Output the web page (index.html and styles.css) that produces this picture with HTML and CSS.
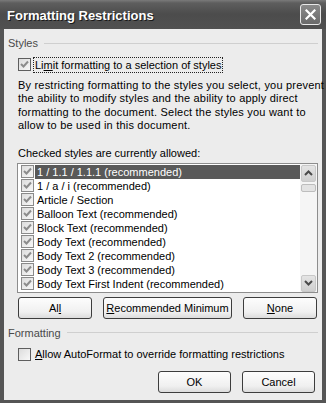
FILE: index.html
```html
<!DOCTYPE html>
<html lang="en">
<head>
    <meta charset="UTF-8">
    <title>Formatting Restrictions</title>
    <link rel="stylesheet" href="styles.css">
</head>
<body>
    <div class="window">
        <div class="titlebar">
            <span class="title">Formatting Restrictions</span>
            <span class="close">
                <svg width="11" height="11" viewBox="0 0 11 11"><path d="M1.5 1.5 L9.5 9.5 M9.5 1.5 L1.5 9.5" stroke="#fff" stroke-width="2.2" stroke-linecap="square"/></svg>
            </span>
        </div>

        <div class="client">
            <!-- grupo styles -->
            <div class="group-head"><span>Styles</span><i class="rule"></i></div>

            <div class="check-row limit">
                <span class="cb checked"><svg width="9" height="9" viewBox="0 0 9 9"><path d="M1 4 L3.5 6.5 L8 1.5" fill="none" stroke="#8c8c8c" stroke-width="2"/></svg></span>
                <span class="focus">Li<u>m</u>it formatting to a selection of styles</span>
            </div>

            <p class="info">By restricting formatting to the styles you select, you prevent<br>the ability to modify styles and the ability to apply direct<br>formatting to the document. Select the styles you want to<br>allow to be used in this document.</p>

            <p class="caption">Checked styles are currently allowed:</p>

            <div class="listbox">
                <ul class="items">
                    <li class="selected"><span class="cb checked"><svg width="9" height="9" viewBox="0 0 9 9"><path d="M1 4 L3.5 6.5 L8 1.5" fill="none" stroke="#8c8c8c" stroke-width="2"/></svg></span><span class="txt">1 / 1.1 / 1.1.1 (recommended)</span></li>
                    <li><span class="cb checked"><svg width="9" height="9" viewBox="0 0 9 9"><path d="M1 4 L3.5 6.5 L8 1.5" fill="none" stroke="#8c8c8c" stroke-width="2"/></svg></span><span class="txt">1 / a / i (recommended)</span></li>
                    <li><span class="cb checked"><svg width="9" height="9" viewBox="0 0 9 9"><path d="M1 4 L3.5 6.5 L8 1.5" fill="none" stroke="#8c8c8c" stroke-width="2"/></svg></span><span class="txt">Article / Section</span></li>
                    <li><span class="cb checked"><svg width="9" height="9" viewBox="0 0 9 9"><path d="M1 4 L3.5 6.5 L8 1.5" fill="none" stroke="#8c8c8c" stroke-width="2"/></svg></span><span class="txt">Balloon Text (recommended)</span></li>
                    <li><span class="cb checked"><svg width="9" height="9" viewBox="0 0 9 9"><path d="M1 4 L3.5 6.5 L8 1.5" fill="none" stroke="#8c8c8c" stroke-width="2"/></svg></span><span class="txt">Block Text (recommended)</span></li>
                    <li><span class="cb checked"><svg width="9" height="9" viewBox="0 0 9 9"><path d="M1 4 L3.5 6.5 L8 1.5" fill="none" stroke="#8c8c8c" stroke-width="2"/></svg></span><span class="txt">Body Text (recommended)</span></li>
                    <li><span class="cb checked"><svg width="9" height="9" viewBox="0 0 9 9"><path d="M1 4 L3.5 6.5 L8 1.5" fill="none" stroke="#8c8c8c" stroke-width="2"/></svg></span><span class="txt">Body Text 2 (recommended)</span></li>
                    <li><span class="cb checked"><svg width="9" height="9" viewBox="0 0 9 9"><path d="M1 4 L3.5 6.5 L8 1.5" fill="none" stroke="#8c8c8c" stroke-width="2"/></svg></span><span class="txt">Body Text 3 (recommended)</span></li>
                    <li><span class="cb checked"><svg width="9" height="9" viewBox="0 0 9 9"><path d="M1 4 L3.5 6.5 L8 1.5" fill="none" stroke="#8c8c8c" stroke-width="2"/></svg></span><span class="txt">Body Text First Indent (recommended)</span></li>
                </ul>
                <div class="scrollbar">
                    <span class="arrow"><svg width="9" height="6" viewBox="0 0 9 6"><path d="M1 5 L4.5 1.5 L8 5" fill="none" stroke="#4a4a4a" stroke-width="2"/></svg></span>
                    <span class="thumb"></span>
                    <span class="track"></span>
                    <span class="arrow"><svg width="9" height="6" viewBox="0 0 9 6"><path d="M1 1 L4.5 4.5 L8 1" fill="none" stroke="#4a4a4a" stroke-width="2"/></svg></span>
                </div>
            </div>

            <div class="btn-row spread">
                <button class="btn small">Al<u>l</u></button>
                <button class="btn wide"><u>R</u>ecommended Minimum</button>
                <button class="btn small"><u>N</u>one</button>
            </div>

            <!-- grupo formatting -->
            <div class="group-head"><span>Formatting</span><i class="rule"></i></div>

            <div class="check-row allow">
                <span class="cb"></span>
                <span class="lbl"><u>A</u>llow AutoFormat to override formatting restrictions</span>
            </div>

            <div class="btn-row end">
                <button class="btn small">OK</button>
                <button class="btn small">Cancel</button>
            </div>
        </div>
    </div>
</body>
</html>
```

FILE: styles.css
```css
body {
    margin: 0;
    background: #fff;
    font-family: "Liberation Sans", Arial, sans-serif;
    font-size: 11px;
    color: #000;
}

.window {
    width: 326px;
    height: 403px;
    box-sizing: border-box;
    background: #555;
    padding: 0 4px 3px 4px;
    display: flex;
    flex-direction: column;
}

/* barra de titulo */
.titlebar {
    height: 29px;
    margin: 0 -4px;
    padding: 0 4px 0 7px;
    display: flex;
    align-items: center;
    justify-content: space-between;
    background: linear-gradient(#7a7a7a 0, #5e5e5e 3px, #4c4c4c 14px, #505050 29px);
}

.title {
    color: #fff;
    font-weight: bold;
    font-size: 13px;
    text-shadow: 1px 1px 0 #1a1a1a;
    margin-top: 1px;
}

.close {
    width: 19px;
    height: 19px;
    border: 1px solid #e8e8e8;
    border-radius: 3px;
    background: linear-gradient(#8a8a8a, #6a6a6a);
    display: flex;
    align-items: center;
    justify-content: center;
    margin-right: 1px;
}

.client {
    flex: 1;
    background: #ececec;
    padding: 0 4px;
}

.group-head {
    display: flex;
    align-items: center;
    height: 14px;
    color: #4a4a4a;
    margin-top: 7px;
}

.group-head .rule {
    flex: 1;
    height: 1px;
    background: #cfcfcf;
    margin-left: 6px;
}

.check-row {
    display: flex;
    align-items: center;
    margin-left: 10px;
    height: 17px;
}

.limit {
    margin-top: 6px;
}

.allow {
    margin-top: 6px;
}

.cb {
    width: 11px;
    height: 11px;
    border: 1px solid #5e5e5e;
    background: linear-gradient(135deg, #dcdcdc, #f8f8f8);
    display: flex;
    align-items: center;
    justify-content: center;
    flex: none;
}

.focus {
    margin-left: 2px;
    padding: 1px;
    border: 1px dotted #222;
}

.lbl {
    margin-left: 4px;
}

.info {
    margin: 6px 0 0 10px;
    line-height: 13.4px;
    letter-spacing: 0.2px;
    white-space: nowrap;
}

.caption {
    margin: 14px 0 0 10px;
    line-height: 13px;
}

.listbox {
    margin: 3px 0 0 9px;
    height: 130px;
    box-sizing: border-box;
    border: 1px solid #8d8d8d;
    background: #fff;
    display: flex;
}

.items {
    list-style: none;
    margin: 0;
    padding: 1px 0 0 3px;
    flex: 1;
}

.items li {
    height: 14px;
    display: flex;
    align-items: center;
}

.items .cb {
    border-color: #8a8a8a;
    margin-right: 1px;
}

.items .txt {
    flex: 1;
    padding-left: 2px;
    line-height: 14px;
}

.items .selected .txt {
    background: #595959;
    color: #fff;
}

.scrollbar {
    width: 17px;
    display: flex;
    flex-direction: column;
    background: #f5f5f5;
    padding-top: 1px;
}

.scrollbar .arrow {
    height: 15px;
    margin: 0 1px;
    border: 1px solid #c8c8c8;
    border-radius: 2px;
    background: linear-gradient(#e4e4e4, #cfcfcf);
    display: flex;
    align-items: center;
    justify-content: center;
}

.scrollbar .thumb {
    height: 6px;
    margin: 2px 1px 0 1px;
    border: 1px solid #bdbdbd;
    border-radius: 2px;
    background: #e3e3e3;
}

.scrollbar .track {
    flex: 1;
}

.btn-row {
    display: flex;
    margin-left: 10px;
}

.btn-row.spread {
    margin-top: 4px;
    gap: 11px;
}

.btn-row.end {
    justify-content: flex-end;
    gap: 11px;
    margin-top: 8px;
    margin-right: 3px;
}

.btn {
    height: 22px;
    border: 1px solid #3d3d3d;
    border-radius: 3px;
    background: linear-gradient(#fdfdfd, #f0f0f0 70%, #dcdcdc);
    font-family: inherit;
    font-size: 11px;
    color: #000;
    padding: 0;
}

.btn.small {
    width: 74px;
}

.btn.wide {
    width: 129px;
}

.btn-row.end .btn {
    width: 73px;
}
```
